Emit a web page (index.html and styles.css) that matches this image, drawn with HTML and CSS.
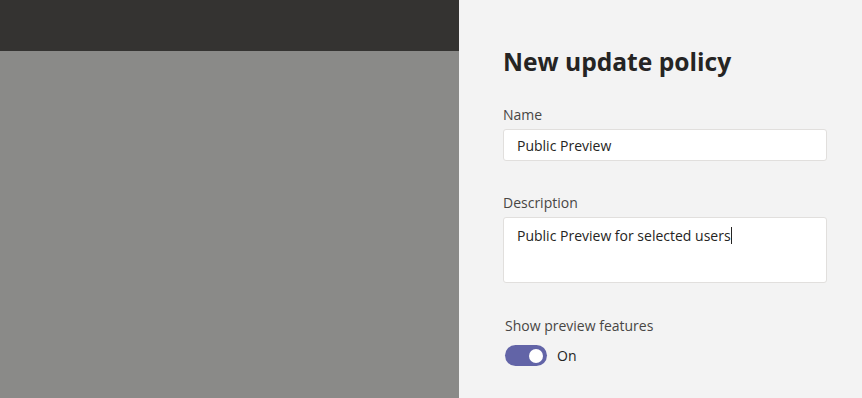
FILE: index.html
```html
<!DOCTYPE html>
<html lang="en">
<head>
<meta charset="utf-8">
<title>New update policy</title>
<link rel="stylesheet" href="styles.css">
</head>
<body>
<div class="app">
  <div class="backdrop">
    <div class="topbar"></div>
    <div class="overlay"></div>
  </div>
  <aside class="panel">
    <h1 class="title">New update policy</h1>
    <div class="field field-name">
      <label class="label">Name</label>
      <div class="input">Public Preview</div>
    </div>
    <div class="field field-desc">
      <label class="label">Description</label>
      <div class="textarea">Public Preview for selected users<span class="caret"></span></div>
    </div>
    <div class="field field-toggle">
      <label class="label toggle-label">Show preview features</label>
      <div class="toggle-row">
        <span class="toggle"><span class="knob"></span></span>
        <span class="toggle-text">On</span>
      </div>
    </div>
  </aside>
</div>
</body>
</html>
```
FILE: styles.css
```css
html, body {
  margin: 0;
  padding: 0;
  height: 100%;
}
body {
  font-family: "Open Sans", "Noto Sans", sans-serif;
  color: #252423;
}
.app {
  display: flex;
  height: 398px;
  overflow: hidden;
}
.backdrop {
  width: 459px;
  display: flex;
  flex-direction: column;
  flex-shrink: 0;
}
.topbar {
  height: 51px;
  background: #343331;
}
.overlay {
  flex: 1;
  background: #8a8a88;
}
.panel {
  flex: 1;
  background: #f3f3f3;
  padding: 42px 35px 0 44px;
  box-sizing: border-box;
}
.title {
  margin: 0;
  font-size: 24.6px;
  font-weight: 700;
  line-height: 40px;
  color: #252423;
}
.field {
  display: flex;
  flex-direction: column;
}
.field-name { margin-top: 23px; }
.field-desc { margin-top: 32px; }
.field-toggle { margin-top: 33px; }
.label {
  font-size: 14px;
  line-height: 20px;
  color: #484644;
  margin-bottom: 4px;
}
.input, .textarea {
  background: #fff;
  border: 1px solid #e1dfdd;
  border-radius: 3px;
  font-size: 14px;
  line-height: 20px;
  color: #252423;
  padding: 6px 13px 4px;
}
.input { height: 20px; }
.textarea { height: 51px; padding-top: 8px; padding-bottom: 5px; }
.caret {
  display: inline-block;
  width: 1px;
  height: 17px;
  background: #252423;
  vertical-align: -3px;
}
.toggle-label { margin-left: 2px; margin-bottom: 9px; }
.toggle-row {
  display: flex;
  align-items: center;
  gap: 10px;
  margin-left: 2px;
}
.toggle {
  width: 42px;
  height: 21px;
  border-radius: 11px;
  background: #6264a7;
  display: flex;
  align-items: center;
  justify-content: flex-end;
  padding: 0 4px;
  box-sizing: border-box;
}
.knob {
  width: 14px;
  height: 14px;
  border-radius: 50%;
  background: #fff;
}
.toggle-text {
  font-size: 14px;
  color: #252423;
}
```
